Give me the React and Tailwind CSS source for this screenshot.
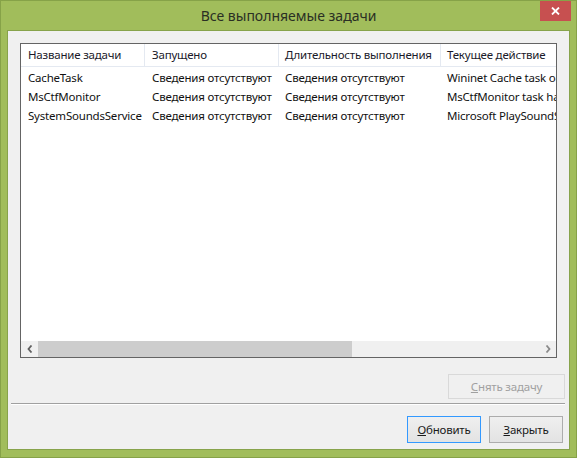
import React from 'react'

const FONT = { fontFamily: '"Segoe UI", "Noto Sans", "Open Sans", sans-serif' }

const columns = [
  { title: 'Название задачи', w: 'w-[124px]', pad: 'pl-[7px]' },
  { title: 'Запущено', w: 'w-[134px]', pad: 'pl-[7px]' },
  { title: 'Длительность выполнения', w: 'w-[162px]', pad: 'pl-[6px]' },
  { title: 'Текущее действие', w: 'w-[200px]', pad: 'pl-[6px]' },
]

const tasks = [
  ['CacheTask', 'Сведения отсутствуют', 'Сведения отсутствуют', 'Wininet Cache task object'],
  ['MsCtfMonitor', 'Сведения отсутствуют', 'Сведения отсутствуют', 'MsCtfMonitor task handler'],
  ['SystemSoundsService', 'Сведения отсутствуют', 'Сведения отсутствуют', 'Microsoft PlaySoundService Class'],
]

function Chevron({ dir, color }) {
  return (
    <svg width="6" height="8" viewBox="0 0 6 8" className="block">
      {dir === 'left' ? (
        <path d="M4.5 0.5 L1.5 4 L4.5 7.5" fill="none" stroke={color} strokeWidth="1.8" />
      ) : (
        <path d="M1.5 0.5 L4.5 4 L1.5 7.5" fill="none" stroke={color} strokeWidth="1.8" />
      )}
    </svg>
  )
}

function Button({ children, focused, disabled, className = '' }) {
  const border = focused ? 'border-[#3399ff]' : disabled ? 'border-[#d9d9d9]' : 'border-[#acacac]'
  const bg = disabled ? 'bg-[#f0f0f0]' : 'bg-gradient-to-b from-[#efefef] to-[#e3e3e3]'
  const text = disabled ? 'text-[#a0a0a0]' : 'text-[#1a1a1a]'
  return (
    <div className={`flex items-center justify-center border text-[11.5px] tracking-[-0.2px] ${border} ${bg} ${text} ${className}`}>
      {children}
    </div>
  )
}

export default function App() {
  return (
    <div
      className="w-[577px] h-[458px] bg-[#a1bd5b] border border-[#86a248] flex flex-col select-none"
      style={FONT}
    >
      {/* Title bar */}
      <div className="h-[29px] grid grid-cols-[1fr_auto_1fr] items-start shrink-0">
        <div />
        <div className="pt-[6px] text-[14px] leading-[18px] text-[#2a2f24]">Все выполняемые задачи</div>
        <div className="flex justify-end pr-[5px]">
          <div className="w-[31px] h-[20px] bg-[#c75050] flex items-center justify-center">
            <svg width="9" height="8" viewBox="0 0 9 8">
              <path d="M1 0.5 L8 7.5 M8 0.5 L1 7.5" stroke="#fff" strokeWidth="1.8" />
            </svg>
          </div>
        </div>
      </div>

      {/* Client area */}
      <div className="ml-[6px] w-[563px] h-[420px] border border-[#87a34b] bg-[#f0f0f0] flex flex-col">
        {/* Task list */}
        <div className="ml-[12px] mt-[12px] w-[537px] h-[315px] border border-[#646464] bg-white flex flex-col overflow-hidden">
          <div className="flex h-[23px] border-b border-[#e4e9f1] shrink-0">
            {columns.map((c, i) => (
              <div
                key={c.title}
                className={`${c.w} ${c.pad} shrink-0 flex items-center text-[11.5px] tracking-[-0.2px] text-[#1a1a2a] whitespace-nowrap overflow-hidden ${i < 3 ? 'border-r border-[#e4e9f1]' : ''}`}
              >
                {c.title}
              </div>
            ))}
          </div>
          <div className="flex-1 pt-[1px] overflow-hidden">
            {tasks.map(row => (
              <div key={row[0]} className="flex h-[19px]">
                {row.map((cell, i) => (
                  <div
                    key={i}
                    className={`${columns[i].w} ${columns[i].pad} shrink-0 flex items-center text-[11.5px] tracking-[-0.2px] text-[#111] whitespace-nowrap overflow-hidden`}
                  >
                    {cell}
                  </div>
                ))}
              </div>
            ))}
          </div>
          {/* Horizontal scrollbar */}
          <div className="h-[16px] flex shrink-0 bg-[#f0f0f0]">
            <div className="w-[17px] flex items-center justify-center">
              <Chevron dir="left" color="#606060" />
            </div>
            <div className="w-[314px] bg-[#cdcdcd]" />
            <div className="flex-1" />
            <div className="w-[17px] flex items-center justify-center">
              <Chevron dir="right" color="#8a8a8a" />
            </div>
          </div>
        </div>

        {/* End task */}
        <div className="flex justify-end pr-[4px] mt-[16px]">
          <Button disabled className="w-[117px] h-[25px]">
            <span><span className="underline">С</span>нять задачу</span>
          </Button>
        </div>

        {/* Separator */}
        <div className="ml-[3px] mr-[4px] mt-[4px] border-t border-[#a0a0a0] border-b border-b-white" />

        {/* Bottom buttons */}
        <div className="flex justify-end gap-[8px] pr-[6px] mt-[11px]">
          <Button focused className="w-[74px] h-[27px]">
            <span><span className="underline">О</span>бновить</span>
          </Button>
          <Button className="w-[74px] h-[27px]">
            <span><span className="underline">З</span>акрыть</span>
          </Button>
        </div>
      </div>
    </div>
  )
}
